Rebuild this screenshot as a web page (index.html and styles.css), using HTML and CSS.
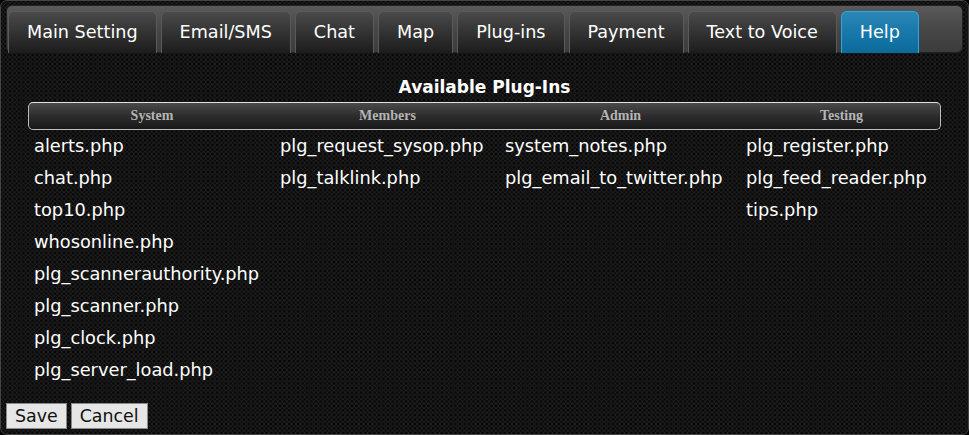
FILE: index.html
```html
<!DOCTYPE html>
<html lang="en">
    <head>
        <title>Plug-ins</title>
        <meta charset="UTF-8" />
        <link rel="stylesheet" href="styles.css">
    </head>
    <body>
        <div class="frame">
            <div class="tabbar">
                <div class="tab">Main Setting</div>
                <div class="tab">Email/SMS</div>
                <div class="tab">Chat</div>
                <div class="tab">Map</div>
                <div class="tab">Plug-ins</div>
                <div class="tab">Payment</div>
                <div class="tab">Text to Voice</div>
                <div class="tab active">Help</div>
            </div>
            <h3 class="title">Available Plug-Ins</h3>
            <div class="plugins">
                <div class="head">
                    <div>System</div>
                    <div>Members</div>
                    <div>Admin</div>
                    <div>Testing</div>
                </div>
                <div class="cols">
                    <ul>
                        <li>alerts.php</li>
                        <li>chat.php</li>
                        <li>top10.php</li>
                        <li>whosonline.php</li>
                        <li>plg_scannerauthority.php</li>
                        <li>plg_scanner.php</li>
                        <li>plg_clock.php</li>
                        <li>plg_server_load.php</li>
                    </ul>
                    <ul>
                        <li>plg_request_sysop.php</li>
                        <li>plg_talklink.php</li>
                    </ul>
                    <ul>
                        <li>system_notes.php</li>
                        <li>plg_email_to_twitter.php</li>
                    </ul>
                    <ul>
                        <li>plg_register.php</li>
                        <li>plg_feed_reader.php</li>
                        <li>tips.php</li>
                    </ul>
                </div>
            </div>
            <div class="actions">
                <button>Save</button>
                <button>Cancel</button>
            </div>
        </div>
    </body>
</html>
```

FILE: styles.css
```css
body {
    margin: 0;
    padding: 0;
    font-family: "DejaVu Sans", Verdana, sans-serif;
    background: #000;
    color: #fff;
}
.frame {
    box-sizing: border-box;
    width: 969px;
    height: 435px;
    border: 1px solid #444;
    border-radius: 7px;
    padding: 4px 5px 0 5px;
    background-color: #080808;
    background-image: radial-gradient(circle, transparent 1px, #2e2e2e 1.4px, #2e2e2e 1.7px, transparent 2.1px);
    background-size: 4.5px 4.5px;
}
.tabbar {
    display: flex;
    gap: 4px;
    height: 48px;
    box-sizing: border-box;
    padding: 5px 0 0 1px;
    border: 1px solid #222;
    border-radius: 6px;
    background: linear-gradient(#5a5a5a, #474747 50%, #3c3c3c);
}
.tab {
    box-sizing: border-box;
    height: 42px;
    padding: 0 18px;
    line-height: 40px;
    font-size: 17.6px;
    color: #fff;
    border: 1px solid #5a5a5a;
    border-bottom: 0;
    border-radius: 6px 6px 0 0;
    background: linear-gradient(#4a4a4a, #333 50%, #1c1c1c);
}
.tab.active {
    border-color: #2aa8e6;
    background: linear-gradient(#2c86b6, #1878aa 50%, #0a6a9c);
}
.title {
    margin: 24px 0 0 0;
    text-align: center;
    font-size: 17px;
    line-height: 20px;
}
.plugins {
    margin: 5px 0 0 22px;
    width: 913px;
}
.head {
    display: grid;
    grid-template-columns: 246px 225px 241px 201px;
    box-sizing: border-box;
    height: 28px;
    border: 1px solid #bdbdbd;
    border-top-color: #e0e0e0;
    border-radius: 5px;
    background: linear-gradient(#4a4a4a, #2c2c2c 50%, #181818);
    font-family: "Liberation Serif", "Times New Roman", serif;
    font-weight: bold;
    font-size: 14px;
    color: #b4b4b4;
    line-height: 26px;
    text-align: center;
}
.cols {
    display: grid;
    grid-template-columns: 246px 225px 241px 201px;
}
.cols ul {
    list-style: none;
    margin: 0;
    padding: 0 0 0 6px;
}
.cols li {
    height: 32px;
    line-height: 32px;
    font-size: 17.8px;
}
.actions {
    display: flex;
    gap: 4px;
    margin-top: 17px;
}
.actions button {
    font-family: "DejaVu Sans", Verdana, sans-serif;
    font-size: 17.4px;
    height: 26px;
    padding: 0 8px;
    color: #111;
    background: #e6e6e6;
    border: 1px solid #8a8a8a;
    border-radius: 0;
}
```
